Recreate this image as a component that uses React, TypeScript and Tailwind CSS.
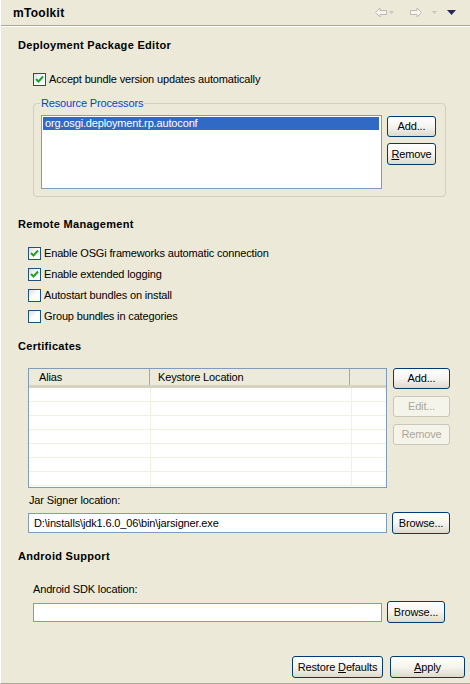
import type { ReactNode } from "react";

const FONT = { fontFamily: '"Liberation Sans", Arial, sans-serif' };

function Check({ checked, label }: { checked?: boolean; label: string }) {
  return (
    <div className="flex items-center h-[13px] leading-[13px]">
      <span className="w-[13px] h-[13px] border border-[#1C5180] bg-linear-to-br from-[#DCDCD7] via-white to-white flex items-center justify-center">
        {checked && (
          <svg width="9" height="9" viewBox="0 0 9 9">
            <path d="M1 4 L3.5 6.5 L8 1.5" stroke="#21A121" strokeWidth="2" fill="none" />
          </svg>
        )}
      </span>
      <span className="ml-[3px]">{label}</span>
    </div>
  );
}

function Btn({ children, w, h = 21, disabled }: { children: ReactNode; w: number; h?: number; disabled?: boolean }) {
  return (
    <div
      className={
        "flex items-center justify-center rounded-[3px] border shrink-0 " +
        (disabled
          ? "border-[#C9C7BA] bg-[#F5F4EA] text-[#ACA899]"
          : "border-[#003C74] bg-linear-to-b from-white via-[#F5F4EF] to-[#DEDACB] text-black")
      }
      style={{ width: w, height: h }}
    >
      {children}
    </div>
  );
}

function Heading({ children }: { children: ReactNode }) {
  return <div className="font-bold h-[13px] leading-[13px] ml-[17px] tracking-[0.3px]">{children}</div>;
}

function Arrow({ dir }: { dir: "l" | "r" }) {
  return (
    <svg width="12" height="11" viewBox="0 0 12 11" className={dir === "r" ? "-scale-x-100" : ""}>
      <path d="M0.5 5.5 L5 1 L5 3.5 L11.5 3.5 L11.5 7.5 L5 7.5 L5 10 Z" fill="#F7F6F0" stroke="#BDBBAF" />
    </svg>
  );
}

function MiniTri({ color = "#C8C6BA" }: { color?: string }) {
  return (
    <svg width="5" height="3" viewBox="0 0 5 3">
      <path d="M0 0 L5 0 L2.5 3 Z" fill={color} />
    </svg>
  );
}

export default function App() {
  const rows = Array.from({ length: 7 });
  return (
    <div
      className="w-[470px] h-[684px] bg-[#ECE9D8] text-[11px] tracking-[-0.15px] text-black border-l border-l-white border-b border-b-[#ACA899] overflow-hidden"
      style={FONT}
    >
      {/* view title bar */}
      <div className="h-[26px] flex items-center justify-between pl-[12px] pr-[14px] border-b border-b-[#ACA899]">
        <span className="font-bold text-[12px] tracking-[0.3px]">mToolkit</span>
        <div className="flex items-center">
          <Arrow dir="l" />
          <span className="ml-[2px] flex"><MiniTri /></span>
          <span className="ml-[16px] flex"><Arrow dir="r" /></span>
          <span className="ml-[10px] flex"><MiniTri /></span>
          <svg width="9" height="5" viewBox="0 0 9 5" className="ml-[10px]">
            <path d="M0 0 L9 0 L4.5 5 Z" fill="#26265E" />
          </svg>
        </div>
      </div>
      <div className="border-t border-t-white">
        <div className="mt-[12px]">
          <Heading>Deployment Package Editor</Heading>
        </div>

        <div className="mt-[21px] ml-[32px]">
          <Check checked label="Accept bundle version updates automatically" />
        </div>

        {/* Resource processors group */}
        <div className="mt-[17px] ml-[32px] w-[413px] border border-[#D0D0BF] rounded-[4px] pb-[7px]">
          <div className="-mt-[7px] ml-[6px] h-[13px] leading-[13px] px-[1px] bg-[#ECE9D8] w-fit text-[#0046D5]">
            Resource Processors
          </div>
          <div className="mt-[5px] ml-[7px] flex items-start">
            <div className="w-[341px] h-[74px] border border-[#7F9DB9] bg-white p-[1px]">
              <div className="h-[13px] leading-[13px] bg-[#316AC5] text-white pl-[2px] mr-[1px]">
                org.osgi.deployment.rp.autoconf
              </div>
            </div>
            <div className="ml-[5px] mt-[1px] flex flex-col gap-[6px]">
              <Btn w={49}>Add...</Btn>
              <Btn w={49} h={22}>
                <span><span className="underline">R</span>emove</span>
              </Btn>
            </div>
          </div>
        </div>

        <div className="mt-[21px]">
          <Heading>Remote Management</Heading>
        </div>
        <div className="mt-[16px] ml-[27px] flex flex-col gap-[8px]">
          <Check checked label="Enable OSGi frameworks automatic connection" />
          <Check checked label="Enable extended logging" />
          <Check label="Autostart bundles on install" />
          <Check label="Group bundles in categories" />
        </div>

        <div className="mt-[17px]">
          <Heading>Certificates</Heading>
        </div>

        <div className="mt-[15px] ml-[27px] flex items-start">
          <div className="w-[359px] h-[120px] border border-[#7F9DB9] bg-white overflow-hidden">
            <div className="h-[19px] bg-[#EBEADB] flex items-center border-b-[3px] border-b-[#D6D2C2]">
              <div className="w-[121px] h-full flex items-center pl-[10px] border-r border-r-[#ACA899]">Alias</div>
              <div className="w-[200px] h-full flex items-center pl-[8px] border-r border-r-[#ACA899]">Keystore Location</div>
              <div className="flex-1" />
            </div>
            {rows.map((_, i) => (
              <div key={i} className="h-[14px] flex border-b border-b-[#F1EFE2]">
                <div className="w-[122px] border-r border-r-[#F1EFE2]" />
                <div className="w-[201px] border-r border-r-[#F1EFE2]" />
                <div className="flex-1" />
              </div>
            ))}
          </div>
          <div className="ml-[6px] flex flex-col gap-[7px]">
            <Btn w={57}>Add...</Btn>
            <Btn w={57} disabled>Edit...</Btn>
            <Btn w={57} disabled>Remove</Btn>
          </div>
        </div>

        <div className="mt-[6px] ml-[28px] h-[13px] leading-[13px]">Jar Signer location:</div>
        <div className="mt-[5px] ml-[27px] flex items-center">
          <div className="w-[359px] h-[20px] border border-[#7F9DB9] bg-white flex items-center pl-[5px]">
            D:\installs\jdk1.6.0_06\bin\jarsigner.exe
          </div>
          <div className="ml-[5px]">
            <Btn w={58} h={22}>Browse...</Btn>
          </div>
        </div>

        <div className="mt-[16px]">
          <Heading>Android Support</Heading>
        </div>
        <div className="mt-[20px] ml-[32px] h-[13px] leading-[13px]">Android SDK location:</div>
        <div className="mt-[5px] ml-[32px] flex items-center">
          <div className="w-[349px] h-[19px] border border-[#7F9DB9] bg-white" />
          <div className="ml-[5px]">
            <Btn w={58} h={22}>Browse...</Btn>
          </div>
        </div>

        <div className="mt-[33px] flex justify-end pr-[5px] gap-[7px]">
          <Btn w={91} h={22}>
            <span>Restore <span className="underline">D</span>efaults</span>
          </Btn>
          <Btn w={75} h={22}>
            <span><span className="underline">A</span>pply</span>
          </Btn>
        </div>
      </div>
    </div>
  );
}
